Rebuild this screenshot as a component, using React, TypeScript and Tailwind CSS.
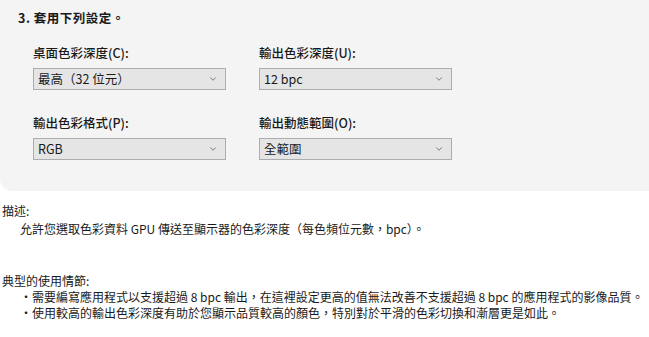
import { ChevronDown } from "lucide-react";

const font = { fontFamily: '"Noto Sans CJK TC", "Noto Sans", sans-serif' };

function Select({ value }: { value: string }) {
  return (
    <div className="flex h-[22px] w-[193px] items-center justify-between border border-[#adadad] bg-[#e5e5e5] pl-[4px] pr-[7px] text-[12.5px] text-[#1a1a1a]">
      <span>{value}</span>
      <ChevronDown size={10} strokeWidth={1.6} className="text-[#444]" />
    </div>
  );
}

function Field({ label, value }: { label: string; value: string }) {
  return (
    <div className="flex flex-col">
      <span className="mb-[8px] text-[12.5px] font-medium leading-[15px] text-[#1a1a1a]">{label}</span>
      <Select value={value} />
    </div>
  );
}

export default function App() {
  return (
    <div style={font} className="h-[337px] w-[649px] bg-white text-[#1a1a1a]">
      <section className="h-[191px] rounded-bl-[12px] bg-[#f4f4f4] pl-[18px] pt-[10px]">
        <h2 className="text-[12.5px] font-bold leading-[16px] tracking-[0.5px]">3. 套用下列設定。</h2>
        <div className="ml-[15px] mt-[19px] grid w-[420px] grid-cols-[226px_193px] gap-y-[25px]">
          <Field label="桌面色彩深度(C):" value="最高（32 位元）" />
          <Field label="輸出色彩深度(U):" value="12 bpc" />
          <Field label="輸出色彩格式(P):" value="RGB" />
          <Field label="輸出動態範圍(O):" value="全範圍" />
        </div>
      </section>
      <div className="pl-[2px] pt-[11px] text-[12px]">
        <p className="leading-[18px]">描述:</p>
        <p className="pl-[18px] leading-[18px]">允許您選取色彩資料 GPU 傳送至顯示器的色彩深度（每色頻位元數，bpc）。</p>
        <p className="mt-[34px] leading-[18px]">典型的使用情節:</p>
        <ul className="-mt-[1px] pl-[18px] leading-[16px]">
          <li>・需要編寫應用程式以支援超過 8 bpc 輸出，在這裡設定更高的值無法改善不支援超過 8 bpc 的應用程式的影像品質。</li>
          <li>・使用較高的輸出色彩深度有助於您顯示品質較高的顏色，特別對於平滑的色彩切換和漸層更是如此。</li>
        </ul>
      </div>
    </div>
  );
}
